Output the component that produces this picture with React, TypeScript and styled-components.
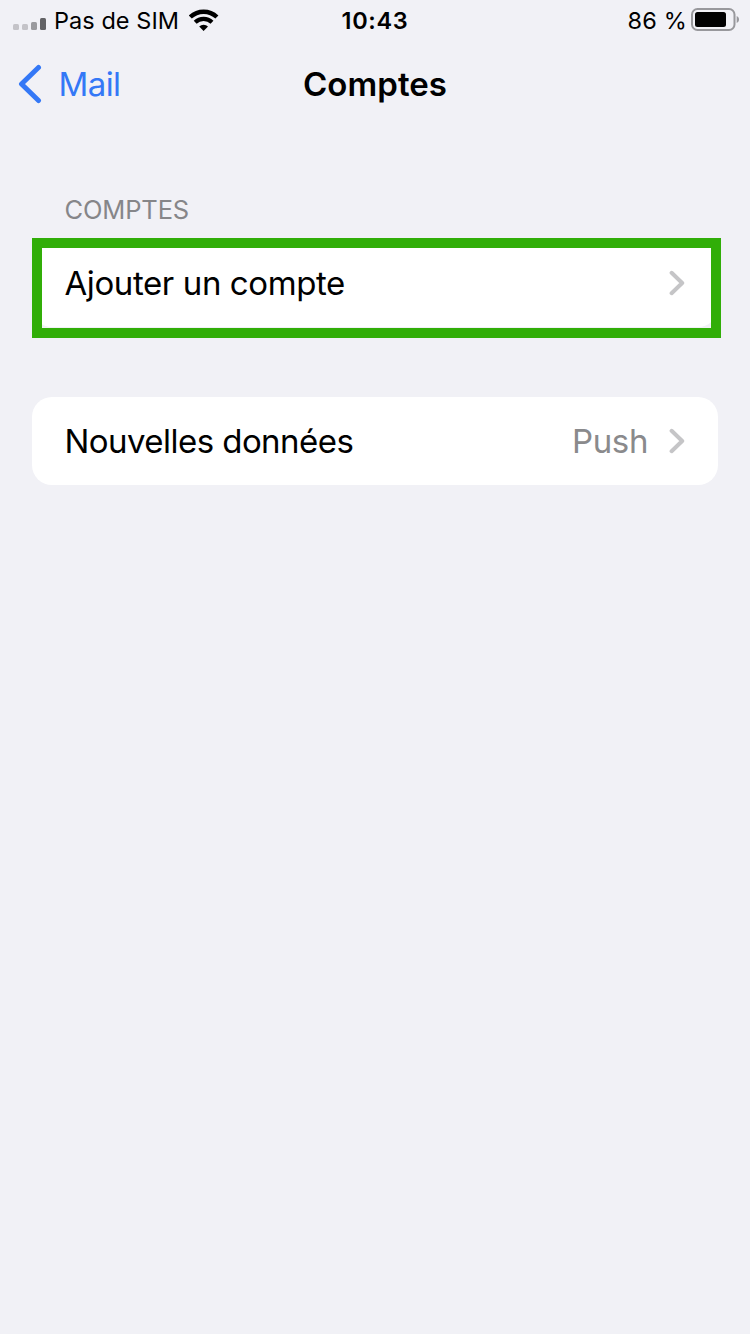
import React from "react";
import styled, { createGlobalStyle } from "styled-components";

const GlobalStyle = createGlobalStyle`
  * { box-sizing: border-box; }
  html, body { margin: 0; background: #f1f1f6; }
  body { font-family: Inter, "Liberation Sans", sans-serif; color: #000; }
  svg { display: block; flex: none; }
`;

const Screen = styled.div`
  width: 750px;
  min-height: 1334px;
  background: #f1f1f6;
`;

const StatusBar = styled.header`
  display: grid;
  grid-template-columns: 1fr auto 1fr;
  height: 40px;
  padding: 0 11px 0 13px;
  font-size: 23.5px;
  line-height: 41px;
  white-space: nowrap;
`;

const StatusGroup = styled.div<{ $end?: boolean }>`
  display: flex;
  justify-content: ${(p) => (p.$end ? "flex-end" : "flex-start")};
`;

const Carrier = styled.span`
  margin-left: 7px;
  width: 135px;
  letter-spacing: 0.05px;
`;

const Clock = styled.span`
  margin-right: 2px;
  font-weight: 600;
  letter-spacing: 0.65px;
`;

const BatteryLevel = styled.span`
  margin-right: 4px;
  letter-spacing: 0.15px;
`;

const NavBar = styled.nav`
  display: grid;
  grid-template-columns: 1fr auto 1fr;
  align-items: center;
  height: 88px;
  padding: 0 18px;
`;

const BackButton = styled.a`
  display: flex;
  align-items: center;
  gap: 16.5px;
  color: #3478f6;
  font-size: 33px;
  line-height: 40px;
  letter-spacing: -0.6px;
`;

const Title = styled.h1`
  margin: 0;
  font-size: 33px;
  line-height: 40px;
  font-weight: 600;
  letter-spacing: 0.05px;
`;

const Content = styled.main`
  padding: 64px 32px 0;
`;

const SectionLabel = styled.h2`
  margin: 0;
  height: 47px;
  padding-left: 32.5px;
  font-size: 25.5px;
  font-weight: 400;
  line-height: 36px;
  letter-spacing: -0.15px;
  color: #868689;
`;

const Card = styled.section`
  position: relative;
  display: flex;
  align-items: center;
  height: 88px;
  padding: 0 33px 0 32.5px;
  border-radius: 20px;
  background: #fff;
  font-size: 33px;
  line-height: 42px;
  & + & { margin-top: 70px; }
`;

const Label = styled.span<{ $tracking: number }>`
  flex: 1;
  letter-spacing: ${(p) => p.$tracking}px;
`;

const Value = styled.span`
  margin-right: 21px;
  color: #8a8a8c;
  letter-spacing: -0.4px;
`;

const Highlight = styled.div`
  position: absolute;
  top: -1px;
  left: 0;
  width: 689px;
  height: 100px;
  border: 10px solid #31ae08;
  pointer-events: none;
`;

const Disclosure = () => (
  <svg width="16" height="26" viewBox="0 0 16 26" fill="none">
    <path d="M2.6 2.8 13.2 13 2.6 23.2" stroke="#c5c5c7" strokeWidth="4" strokeLinecap="round" strokeLinejoin="round" />
  </svg>
);

const Signal = () => (
  <svg width="34" height="40" viewBox="0 0 34 40">
    <rect x="0" y="24" width="6" height="6" rx="1.5" fill="#c4c3c8" />
    <rect x="9" y="24" width="6" height="6" rx="1.5" fill="#c4c3c8" />
    <rect x="18" y="22" width="6" height="8" rx="1.5" fill="#9a9a9e" />
    <rect x="27" y="18" width="6" height="12" rx="1.5" fill="#626265" />
  </svg>
);

const Wifi = () => (
  <svg width="30" height="40" viewBox="0 0 30 40" fill="none">
    <path d="M1.3 17a19.3 19.3 0 0 1 26.6 0" stroke="#000" strokeWidth="4.4" />
    <path d="M6.2 22.2a12.200 12.200 0 0 1 16.800 0" stroke="#000" strokeWidth="4.2" />
    <path d="M14.600 31 10.200 26.600a6.400 6.400 0 0 1 8.800 0Z" fill="#000" />
  </svg>
);

const Battery = () => (
  <svg width="48" height="40" viewBox="0 0 48 40">
    <rect x="1" y="9" width="42.5" height="21" rx="5.5" fill="none" stroke="#98989c" strokeWidth="2" />
    <rect x="4" y="12" width="31" height="15" rx="2.5" fill="#000" />
    <path d="M45.700 16c1.700.8 2.300 2 2.300 3.500s-.6 2.700-2.300 3.500Z" fill="#98989c" />
  </svg>
);

export default function App() {
  return (
    <Screen>
      <GlobalStyle />
      <StatusBar>
        <StatusGroup>
          <Signal />
          <Carrier>Pas de SIM</Carrier>
          <Wifi />
        </StatusGroup>
        <Clock>10:43</Clock>
        <StatusGroup $end>
          <BatteryLevel>86 %</BatteryLevel>
          <Battery />
        </StatusGroup>
      </StatusBar>
      <NavBar>
        <BackButton>
          <svg width="24" height="40" viewBox="0 0 24 40" fill="none">
            <path d="M20.5 3.500 3.500 20 20.500 36.500" stroke="#3478f6" strokeWidth="5" strokeLinecap="round" strokeLinejoin="round" />
          </svg>
          Mail
        </BackButton>
        <Title>Comptes</Title>
      </NavBar>
      <Content>
        <SectionLabel>COMPTES</SectionLabel>
        <Card>
          <Label $tracking={-0.4}>Ajouter un compte</Label>
          <Disclosure />
          <Highlight />
        </Card>
        <Card>
          <Label $tracking={-0.55}>Nouvelles données</Label>
          <Value>Push</Value>
          <Disclosure />
        </Card>
      </Content>
    </Screen>
  );
}
